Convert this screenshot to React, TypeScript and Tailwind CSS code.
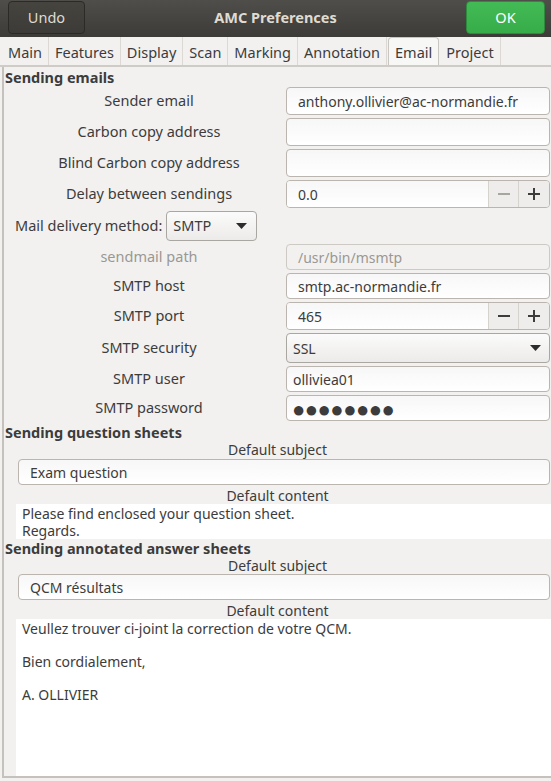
import React from "react";

const font = { fontFamily: '"Noto Sans", "Open Sans", sans-serif' };

function Entry({ value, className = "", textClass = "pl-[11px]", h = "h-[28px]", disabled = false }: { value?: string; className?: string; textClass?: string; h?: string; disabled?: boolean }) {
  return (
    <div
      className={`${h} flex items-center rounded-[4px] border ${disabled ? "bg-[#f2f1f0] text-[#9a9893] border-[#cdc9c4]" : "border-[#bab5ae] bg-gradient-to-b from-[#f7f7f7] to-[#ffffff] text-[#3c3c3c]"} ${textClass} ${className}`}
    >
      {value}
    </div>
  );
}

function Spin({ value, minusDisabled }: { value: string; minusDisabled?: boolean }) {
  return (
    <div className="h-[28px] flex rounded-[4px] border border-[#bab5ae] overflow-hidden">
      <div className="flex-1 flex items-center pl-[11px] bg-gradient-to-b from-[#f7f7f7] to-[#ffffff] text-[#3c3c3c]">{value}</div>
      <div className="w-[30px] flex items-center justify-center bg-[#efedec] border-l border-[#d6d2cd]">
        <svg width="12" height="12" viewBox="0 0 12 12">
          <rect x="0" y="5" width="12" height="2" fill={minusDisabled ? "#a9a6a2" : "#3c3c3c"} />
        </svg>
      </div>
      <div className="w-[31px] flex items-center justify-center bg-[#efedec] border-l border-[#d6d2cd]">
        <svg width="12" height="12" viewBox="0 0 12 12">
          <rect x="0" y="5" width="12" height="2" fill="#3c3c3c" />
          <rect x="5" y="0" width="2" height="12" fill="#3c3c3c" />
        </svg>
      </div>
    </div>
  );
}

function Arrow() {
  return (
    <svg width="11" height="6" viewBox="0 0 11 6">
      <path d="M0 0 L11 0 L5.5 6 Z" fill="#2c2c2c" />
    </svg>
  );
}

function Row({ label, children, dim = false }: { label: string; children: React.ReactNode; dim?: boolean }) {
  return (
    <div className="flex items-center">
      <div className={`w-[280px] pl-[10px] text-center text-[14.5px] ${dim ? "text-[#9a9893]" : "text-[#3c3c3c]"}`}>{label}</div>
      <div className="flex-1 pl-[2px] pr-[1px]">{children}</div>
    </div>
  );
}

const tabs = ["Main", "Features", "Display", "Scan", "Marking", "Annotation", "Email", "Project"];

export default function App() {
  return (
    <div className="w-[551px] h-[781px] bg-[#f2f1f0] text-[14px] text-[#3c3c3c] overflow-hidden flex flex-col" style={font}>
      {/* Header bar */}
      <div className="h-[37px] shrink-0 bg-gradient-to-b from-[#504e4a] to-[#3c3b37] flex items-center justify-between px-[8px] pb-[2px] relative text-[14.5px]">
        <div className="w-[77px] h-[33px] rounded-[4px] border border-[#2b2a27] bg-gradient-to-b from-[#46443f] to-[#3c3b37] text-[#dfdbd2] flex items-center justify-center">
          Undo
        </div>
        <div className="absolute left-0 right-0 top-0 h-[35px] flex items-center justify-center font-bold text-[#dfdbd2] pointer-events-none">
          AMC Preferences
        </div>
        <div className="w-[79px] h-[33px] mr-[-2px] rounded-[4px] border border-[#2e8a3c] bg-gradient-to-b from-[#43bb55] to-[#37ac49] text-white flex items-center justify-center">
          OK
        </div>
      </div>

      {/* Tabs */}
      <div className="h-[30px] shrink-0 flex items-end pl-[2px] border-b-2 border-[#cfcbc6] text-[14.5px]">
        {tabs.map((t) => (
          <div
            key={t}
            className={
              t === "Email"
                ? "h-[28px] px-[6px] mx-[1px] pt-[2px] flex items-center bg-[#f7f7f6] border border-b-0 border-[#c9c5c0] rounded-t-[4px] text-[#3c3c3c]"
                : "h-[28px] px-[6px] pt-[3px] flex items-center border-r border-[#dcd9d5] text-[#3c3c3c]"
            }
          >
            {t}
          </div>
        ))}
      </div>

      {/* Frame */}
      <div className="flex-1 ml-[2px] mb-[3px] border-l-2 border-b-2 border-[#c5c2be] flex flex-col">
        <div className="font-bold h-[18px] flex items-center pl-[1px] mt-[2px] text-[14.5px]">Sending emails</div>
        <div className="flex flex-col gap-[3px]">
          <Row label="Sender email">
            <Entry value="anthony.ollivier@ac-normandie.fr" />
          </Row>
          <Row label="Carbon copy address">
            <Entry />
          </Row>
          <Row label="Blind Carbon copy address">
            <Entry />
          </Row>
          <Row label="Delay between sendings">
            <Spin value="0.0" minusDisabled />
          </Row>
          <div className="flex items-center h-[30px] pl-[11px] text-[14.5px]">
            <span className="mr-[4px]">Mail delivery method:</span>
            <div className="w-[91px] h-[30px] rounded-[4px] border border-[#aaa7a2] bg-gradient-to-b from-[#fbfbfb] to-[#ecebe9] flex items-center justify-between pl-[6px] pr-[9px]">
              <span>SMTP</span>
              <Arrow />
            </div>
          </div>
          <Row label="sendmail path" dim>
            <Entry value="/usr/bin/msmtp" h="h-[26px]" disabled />
          </Row>
          <Row label="SMTP host">
            <Entry value="smtp.ac-normandie.fr" h="h-[26px]" />
          </Row>
          <Row label="SMTP port">
            <Spin value="465" />
          </Row>
          <Row label="SMTP security">
            <div className="h-[30px] rounded-[4px] border border-[#aaa7a2] bg-gradient-to-b from-[#fbfbfb] to-[#ecebe9] flex items-center justify-between pl-[6px] pr-[8px]">
              <span>SSL</span>
              <Arrow />
            </div>
          </Row>
          <Row label="SMTP user">
            <Entry value="olliviea01" h="h-[26px]" textClass="pl-[6px]" />
          </Row>
          <Row label="SMTP password">
            <Entry value="●●●●●●●●" h="h-[26px]" textClass="pl-[5px] text-[22px] leading-none tracking-[-0.5px] text-[#2c2c2c]" />
          </Row>
        </div>

        <div className="font-bold h-[17px] flex items-center pl-[1px] mt-[3px] text-[14.5px]">Sending question sheets</div>
        <div className="h-[17px] flex items-center justify-center">Default subject</div>
        <div className="pl-[14px] pr-[1px] mt-[1px]">
          <Entry value="Exam question" h="h-[26px]" />
        </div>
        <div className="h-[18px] flex items-center justify-center mt-[1px]">Default content</div>
        <div className="ml-[12px] bg-white h-[35px] pl-[6px] leading-[17px] pt-[1px]">
          <div>Please find enclosed your question sheet.</div>
          <div>Regards.</div>
        </div>

        <div className="font-bold h-[17px] flex items-center pl-[1px] mt-[1px] text-[14.5px]">Sending annotated answer sheets</div>
        <div className="h-[17px] flex items-center justify-center">Default subject</div>
        <div className="pl-[14px] pr-[1px]">
          <Entry value="QCM résultats" h="h-[26px]" />
        </div>
        <div className="h-[18px] flex items-center justify-center mt-[1px]">Default content</div>
        <div className="ml-[12px] bg-white flex-1 pl-[6px] pt-[2px] leading-[16.5px]">
          <div>Veullez trouver ci-joint la correction de votre QCM.</div>
          <div className="h-[16.5px]" />
          <div>Bien cordialement,</div>
          <div className="h-[16.5px]" />
          <div>A. OLLIVIER</div>
        </div>
      </div>
    </div>
  );
}
